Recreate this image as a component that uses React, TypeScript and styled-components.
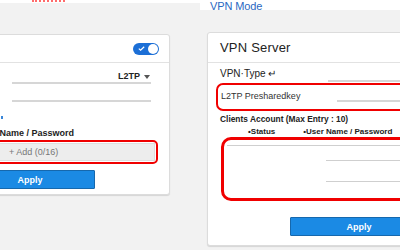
import React from 'react'
import styled, { createGlobalStyle } from 'styled-components'

const GlobalStyle = createGlobalStyle`
  html, body {
    margin: 0;
    padding: 0;
    background: #f2f2f2;
    font-family: 'Liberation Sans', Arial, sans-serif;
  }
`

const Page = styled.div`
  width: 400px;
  height: 250px;
  overflow: hidden;
  background: #f2f2f2;
  display: flex;
  flex-direction: column;
`

const TopBar = styled.div`
  display: flex;
  height: 10px;
`

const TopLeft = styled.div`
  width: 200px;
  height: 3px;
  background: #fff;
  position: relative;
`

const Squiggle = styled.span`
  position: absolute;
  left: 32px;
  top: 0;
  width: 33px;
  height: 0;
  border-bottom: 2px dotted #ff6b6b;
`

const TopRight = styled.div`
  flex: 1;
  height: 10px;
  background: #fff;
  display: flex;
  align-items: flex-start;
  padding-left: 10px;
`

const ModeTitle = styled.span`
  color: #2a68c2;
  font-size: 11px;
  line-height: 11px;
  margin-top: 1px;
  letter-spacing: -0.1px;
`

const Columns = styled.div`
  display: flex;
  align-items: flex-start;
`

const Card = styled.div<{ $top: number; $height: number; $width: number; $left: number }>`
  flex: none;
  margin-top: ${(p) => p.$top}px;
  margin-left: ${(p) => p.$left}px;
  width: ${(p) => p.$width}px;
  height: ${(p) => p.$height}px;
  background: #fff;
  border: 1px solid #dcdcdc;
  border-radius: 3px;
  box-shadow: 0 1px 1px rgba(0, 0, 0, 0.12);
  box-sizing: border-box;
  display: flex;
  flex-direction: column;
`

const CardHeader = styled.div<{ $height: number }>`
  height: ${(p) => p.$height}px;
  border-bottom: 1px solid #e2e2e2;
  display: flex;
  align-items: center;
  padding: 0 10px 0 12px;
  flex: none;
`

const HeaderTitle = styled.span`
  font-size: 13px;
  color: #222;
  letter-spacing: 0.2px;
`

const Toggle = styled.div`
  margin-left: auto;
  width: 26px;
  height: 12px;
  border-radius: 6px;
  background: #1c6fd6;
  position: relative;
  display: flex;
  align-items: center;
  padding-left: 5px;
  box-sizing: border-box;
`

const Knob = styled.span`
  position: absolute;
  right: 1px;
  top: 1px;
  width: 10px;
  height: 10px;
  border-radius: 50%;
  background: #fff;
`

const LeftBody = styled.div`
  display: flex;
  flex-direction: column;
  padding: 0 11px 0 10px;
`

const SelectRow = styled.div`
  margin: 10px 7px 0 47px;
  height: 8px;
  border-bottom: 2px solid #d6d6d6;
  display: flex;
  justify-content: flex-end;
  align-items: flex-end;
  padding-right: 1px;
  padding-bottom: 1px;
  gap: 4px;
`

const SelectValue = styled.span`
  font-size: 9px;
  line-height: 9px;
  font-weight: bold;
  color: #222;
`

const Caret = styled.span`
  width: 0;
  height: 0;
  border-left: 3px solid transparent;
  border-right: 3px solid transparent;
  border-top: 4px solid #555;
  margin-bottom: 2px;
`

const BlankLine = styled.div`
  margin: 16px 7px 0 47px;
  border-bottom: 2px solid #d6d6d6;
`

const Dot = styled.span`
  margin: 14px 0 0 36px;
  width: 2px;
  height: 3px;
  background: #3a86d8;
`

const FieldLabel = styled.div`
  margin: 10px 0 0 12px;
  font-size: 9px;
  font-weight: bold;
  color: #222;
  line-height: 9px;
`

const RedFrame = styled.div<{ $radius: number; $width: number }>`
  border: ${(p) => p.$width}px solid #f00000;
  border-radius: ${(p) => p.$radius}px;
  box-sizing: border-box;
`

const AddFrame = styled(RedFrame)`
  margin-top: 2px;
  height: 24px;
  padding: 1px;
  display: flex;
`

const AddBox = styled.div`
  flex: 1;
  background: #ededed;
  border: 1px solid #dedede;
  display: flex;
  align-items: center;
  padding-left: 40px;
  font-size: 9px;
  color: #777;
`

const ApplyButton = styled.div<{ $width: number }>`
  width: ${(p) => p.$width}px;
  height: 19px;
  background: #1b8ae4;
  border: 1px solid #1668ad;
  border-radius: 1px;
  box-sizing: border-box;
  color: #fff;
  font-size: 9px;
  font-weight: bold;
  display: flex;
  align-items: center;
  justify-content: center;
`

const LeftApply = styled(ApplyButton)`
  margin-top: 6px;
`

const RightBody = styled.div`
  display: flex;
  flex-direction: column;
  padding-left: 12px;
`

const TypeRow = styled.div`
  display: flex;
  align-items: flex-end;
  height: 19px;
`

const TypeLabel = styled.span`
  font-size: 10px;
  color: #222;
  line-height: 10px;
  margin-bottom: 3px;
`

const Underline = styled.div<{ $left: number }>`
  flex: 1;
  margin-left: ${(p) => p.$left}px;
  border-bottom: 2px solid #d6d6d6;
`

const KeyFrame = styled(RedFrame)`
  margin: 1px 0 0 -4px;
  height: 28px;
  display: flex;
  align-items: flex-end;
  padding: 0 0 7px 3px;
`

const KeyLabel = styled.span`
  font-size: 9px;
  color: #333;
  line-height: 9px;
  margin-bottom: 1px;
`

const ClientsTitle = styled.div`
  margin-top: 3px;
  font-size: 8.4px;
  font-weight: bold;
  color: #222;
  line-height: 10px;
`

const ColumnHeads = styled.div`
  display: flex;
  margin-top: 4px;
  font-size: 8px;
  font-weight: bold;
  color: #222;
  line-height: 8px;
`

const ColumnHead = styled.span<{ $left: number }>`
  margin-left: ${(p) => p.$left}px;
`

const ListFrame = styled(RedFrame)`
  margin: 1px 0 0 1px;
  height: 64px;
  display: flex;
  flex-direction: column;
  padding: 5px 0 0 3px;
`

const ListLine = styled.div<{ $left: number; $top: number }>`
  margin: ${(p) => p.$top}px 0 0 ${(p) => p.$left}px;
  border-bottom: 1px solid #cfcfcf;
`

const RightApply = styled(ApplyButton)`
  margin: 16px 0 0 70px;
`

const App = () => {
  return (
    <Page>
      <GlobalStyle />
      <TopBar>
        <TopLeft>
          <Squiggle />
        </TopLeft>
        <TopRight>
          <ModeTitle>VPN Mode</ModeTitle>
        </TopRight>
      </TopBar>
      <Columns>
        <Card $top={24} $height={161} $width={216} $left={-46}>
          <CardHeader $height={27}>
            <Toggle>
              <svg width='7' height='5' viewBox='0 0 7 5'>
                <path d='M0.8 2.6 L2.6 4.2 L6.2 0.8' fill='none' stroke='#fff' strokeWidth='1.2' />
              </svg>
              <Knob />
            </Toggle>
          </CardHeader>
          <LeftBody>
            <SelectRow>
              <SelectValue>L2TP</SelectValue>
              <Caret />
            </SelectRow>
            <BlankLine />
            <Dot />
            <FieldLabel>User Name / Password</FieldLabel>
            <AddFrame $radius={5} $width={2}>
              <AddBox>+ Add (0/16)</AddBox>
            </AddFrame>
            <LeftApply $width={130}>Apply</LeftApply>
          </LeftBody>
        </Card>
        <Card $top={22} $height={214} $width={240} $left={37}>
          <CardHeader $height={29}>
            <HeaderTitle>VPN Server</HeaderTitle>
          </CardHeader>
          <RightBody>
            <TypeRow>
              <TypeLabel>VPN·Type ↵</TypeLabel>
              <Underline $left={52} />
            </TypeRow>
            <KeyFrame $radius={7} $width={2}>
              <KeyLabel>L2TP Presharedkey</KeyLabel>
              <Underline $left={37} />
            </KeyFrame>
            <ClientsTitle>Clients Account (Max Entry : 10)</ClientsTitle>
            <ColumnHeads>
              <ColumnHead $left={28}>•Status</ColumnHead>
              <ColumnHead $left={28}>•User Name / Password</ColumnHead>
            </ColumnHeads>
            <ListFrame $radius={10} $width={3}>
              <ListLine $left={0} $top={0} />
              <ListLine $left={99} $top={14} />
              <ListLine $left={99} $top={20} />
            </ListFrame>
            <RightApply $width={138}>Apply</RightApply>
          </RightBody>
        </Card>
      </Columns>
    </Page>
  )
}

export default App
